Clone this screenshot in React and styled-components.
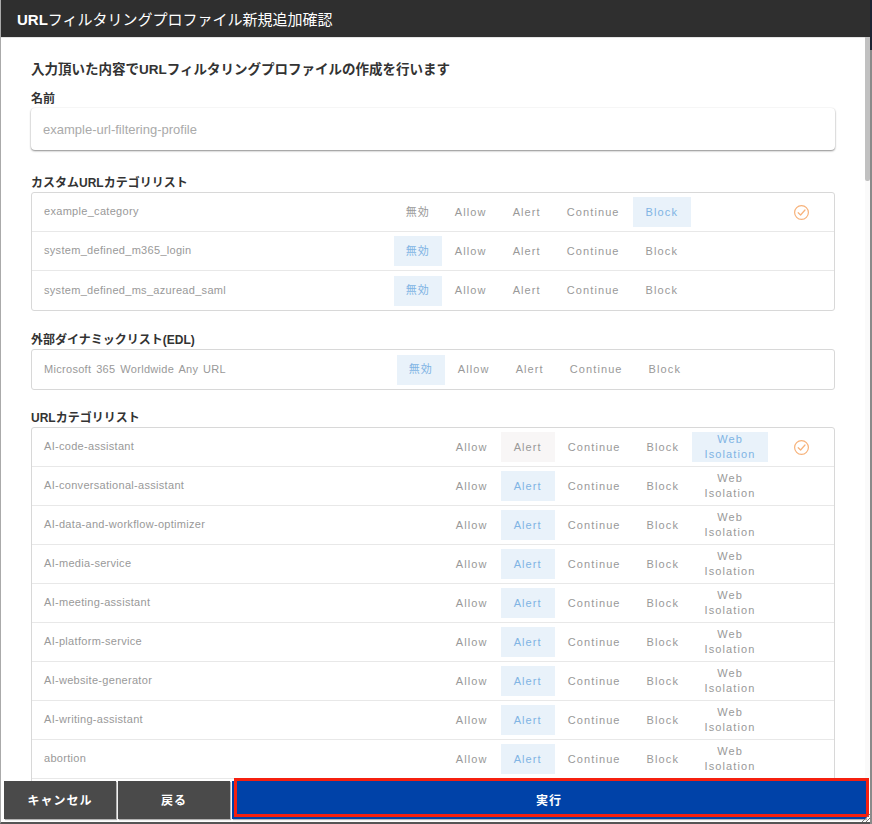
import styled, { createGlobalStyle } from "styled-components";

const baseOptions = ["Allow", "Alert", "Continue", "Block"];
const customOptions = ["無効", ...baseOptions];
const urlOptions = [...baseOptions, "Web Isolation"];

const customRows = [
  { name: "example_category", active: "Block", checked: true },
  { name: "system_defined_m365_login", active: "無効" },
  { name: "system_defined_ms_azuread_saml", active: "無効" },
];

const urlRows = [
  { name: "AI-code-assistant", active: "Web Isolation", previous: "Alert", checked: true },
  { name: "AI-conversational-assistant", active: "Alert" },
  { name: "AI-data-and-workflow-optimizer", active: "Alert" },
  { name: "AI-media-service", active: "Alert" },
  { name: "AI-meeting-assistant", active: "Alert" },
  { name: "AI-platform-service", active: "Alert" },
  { name: "AI-website-generator", active: "Alert" },
  { name: "AI-writing-assistant", active: "Alert" },
  { name: "abortion", active: "Alert" },
];

const GlobalStyle = createGlobalStyle`
  html, body {
    margin: 0;
    height: 100%;
    background: #fff;
    overflow: hidden;
  }
  * {
    box-sizing: border-box;
  }
  body {
    font-family: "Liberation Sans", "Noto Sans CJK JP", sans-serif;
  }
`;

const Modal = styled.div`
  position: relative;
  display: flex;
  flex-direction: column;
  width: 870px;
  height: 824px;
  background: #fff;
  border-left: 1px solid #aaa;
  border-bottom: 2px solid #555;
`;

const Header = styled.header`
  flex: none;
  height: 37px;
  padding-left: 16px;
  display: flex;
  align-items: center;
  background: #2f2f2f;
  color: #fff;
  font-size: 15px;
  font-weight: 400;

  strong {
    font-weight: 700;
  }
`;

const Body = styled.div`
  flex: 1;
  min-height: 0;
  overflow: hidden;
  padding: 0 35px 0 30px;
  border-top: 1px solid #e4e4e4;
`;

const Lead = styled.h1`
  margin: 22px 0 0;
  height: 19px;
  line-height: 19px;
  font-size: 13.5px;
  font-weight: 700;
  color: #333;
`;

const SectionLabel = styled.h2`
  margin: ${(p) => p.$top}px 0 0;
  height: 14px;
  line-height: 14px;
  font-size: 12px;
  font-weight: 700;
  color: #333;
`;

const ReadOnlyInput = styled.div`
  margin-top: 2px;
  height: 42px;
  padding-left: 12px;
  display: flex;
  align-items: center;
  background: #fff;
  border-radius: 4px;
  box-shadow: 0 1px 2px rgba(0, 0, 0, 0.45), 0 0 2px rgba(0, 0, 0, 0.06);
  color: #aaa;
  font-size: 13px;
`;

const Table = styled.div`
  margin-top: 2px;
  border: 1px solid #d8d8d8;
  border-radius: 3px;
  padding-bottom: ${(p) => (p.$continues ? "40px" : "0")};
`;

const Row = styled.div`
  display: flex;
  align-items: center;
  height: 39px;
  padding-left: 12px;
  border-bottom: ${(p) => (p.$closing ? "0" : "1px solid #e8e8e8")};
`;

const Name = styled.div`
  flex: 1;
  font-size: 11px;
  letter-spacing: 0.3px;
  word-spacing: 1.5px;
  color: #999;
  margin-top: -2px;
`;

const Option = styled.div`
  display: flex;
  align-items: center;
  justify-content: center;
  height: 30px;
  padding: 0 ${(p) => (p.$cjk ? "12px" : "13px")};
  text-align: center;
  font-size: 11px;
  line-height: 15px;
  letter-spacing: 1.1px;
  color: ${(p) => (p.$active ? "#80b4e4" : "#999")};
  background: ${(p) => (p.$active ? "#e9f2fa" : p.$previous ? "#f8f6f6" : "transparent")};
  width: ${(p) => (p.$wrap ? "76px" : "auto")};
`;

const Status = styled.div`
  flex: none;
  width: ${(p) => p.$width}px;
  padding-right: 25px;
  display: flex;
  justify-content: flex-end;
  color: #f7b27a;
`;

const Footer = styled.footer`
  flex: none;
  height: 41px;
  padding: 0 3px 3px 3px;
  display: flex;
  gap: 2px;
  background: #fff;
`;

const FooterButton = styled.button`
  flex: ${(p) => (p.$grow ? "1" : "none")};
  width: ${(p) => (p.$grow ? "auto" : "112px")};
  margin-right: ${(p) => (p.$grow ? "1px" : "0")};
  border: 0;
  padding: 0 0 2px;
  background: ${(p) => (p.$grow ? "#0042a8" : "#4a4a4a")};
  box-shadow: 1px 1px 1px rgba(0, 0, 0, 0.3);
  color: #fff;
  font-family: inherit;
  font-size: 12px;
  font-weight: 700;
  letter-spacing: 1px;
`;

const ScrollThumb = styled.div`
  position: absolute;
  top: 37px;
  right: 0;
  width: 5px;
  height: 144px;
  background: #c1c1c1;
  border-radius: 0 0 2px 2px;
`;

const ScrollTrack = styled.div`
  position: absolute;
  top: 37px;
  right: 0;
  bottom: 41px;
  width: 5px;
  background: #fafafa;
`;

const Highlight = styled.div`
  position: absolute;
  left: 233px;
  right: 1px;
  top: 778px;
  height: 39px;
  border: 3.5px solid #f5200f;
  pointer-events: none;
`;

const ResizeGrip = styled.svg`
  position: absolute;
  right: 0;
  bottom: 0;
  width: 9px;
  height: 8px;
`;

const RightEdge = styled.div`
  position: fixed;
  top: 0;
  bottom: 0;
  left: 870px;
  width: 2px;
  background: #8a8a8a;
`;

const RightEdgeTop = styled.div`
  position: fixed;
  top: 0;
  left: 870px;
  width: 2px;
  height: 50px;
  background: #1c2333;
`;

const CheckIcon = () => (
  <svg width="15" height="15" viewBox="0 0 15 15" fill="none" stroke="currentColor" strokeWidth="1.2">
    <circle cx="7.5" cy="7.5" r="6.9" />
    <path d="M4.2 7.7 L6.6 10 L11 5" strokeLinecap="round" strokeLinejoin="round" />
  </svg>
);

function OptionRow({ row, options, statusWidth, closing }) {
  return (
    <Row $closing={closing}>
      <Name>{row.name}</Name>
      {options.map((option) => (
        <Option
          key={option}
          $active={row.active === option}
          $previous={row.previous === option}
          $wrap={option === "Web Isolation"}
          $cjk={option === "無効"}
        >
          {option}
        </Option>
      ))}
      <Status $width={statusWidth}>{row.checked ? <CheckIcon /> : null}</Status>
    </Row>
  );
}

export default function App() {
  return (
    <>
      <GlobalStyle />
      <RightEdge />
      <RightEdgeTop />
      <Modal>
        <Header>
          <span>
            <strong>URL</strong>フィルタリングプロファイル新規追加確認
          </span>
        </Header>
        <Body>
          <Lead>入力頂いた内容でURLフィルタリングプロファイルの作成を行います</Lead>
          <SectionLabel $top={13}>名前</SectionLabel>
          <ReadOnlyInput>example-url-filtering-profile</ReadOnlyInput>
          <SectionLabel $top={26}>カスタムURLカテゴリリスト</SectionLabel>
          <Table>
            {customRows.map((row, i) => (
              <OptionRow
                key={row.name}
                row={row}
                options={customOptions}
                statusWidth={143}
                closing={i === customRows.length - 1}
              />
            ))}
          </Table>
          <SectionLabel $top={22}>外部ダイナミックリスト(EDL)</SectionLabel>
          <Table>
            <OptionRow
              row={{ name: "Microsoft 365 Worldwide Any URL", active: "無効" }}
              options={customOptions}
              statusWidth={140}
              closing
            />
          </Table>
          <SectionLabel $top={21}>URLカテゴリリスト</SectionLabel>
          <Table $continues>
            {urlRows.map((row) => (
              <OptionRow key={row.name} row={row} options={urlOptions} statusWidth={66} />
            ))}
          </Table>
        </Body>
        <Footer>
          <FooterButton>キャンセル</FooterButton>
          <FooterButton>戻る</FooterButton>
          <FooterButton $grow>実行</FooterButton>
        </Footer>
        <ScrollTrack />
        <ScrollThumb />
        <Highlight />
        <ResizeGrip viewBox="0 0 9 8">
          <path d="M1 8 L9 0 M5 8 L9 4" stroke="#777" strokeWidth="1" fill="none" />
        </ResizeGrip>
      </Modal>
    </>
  );
}
